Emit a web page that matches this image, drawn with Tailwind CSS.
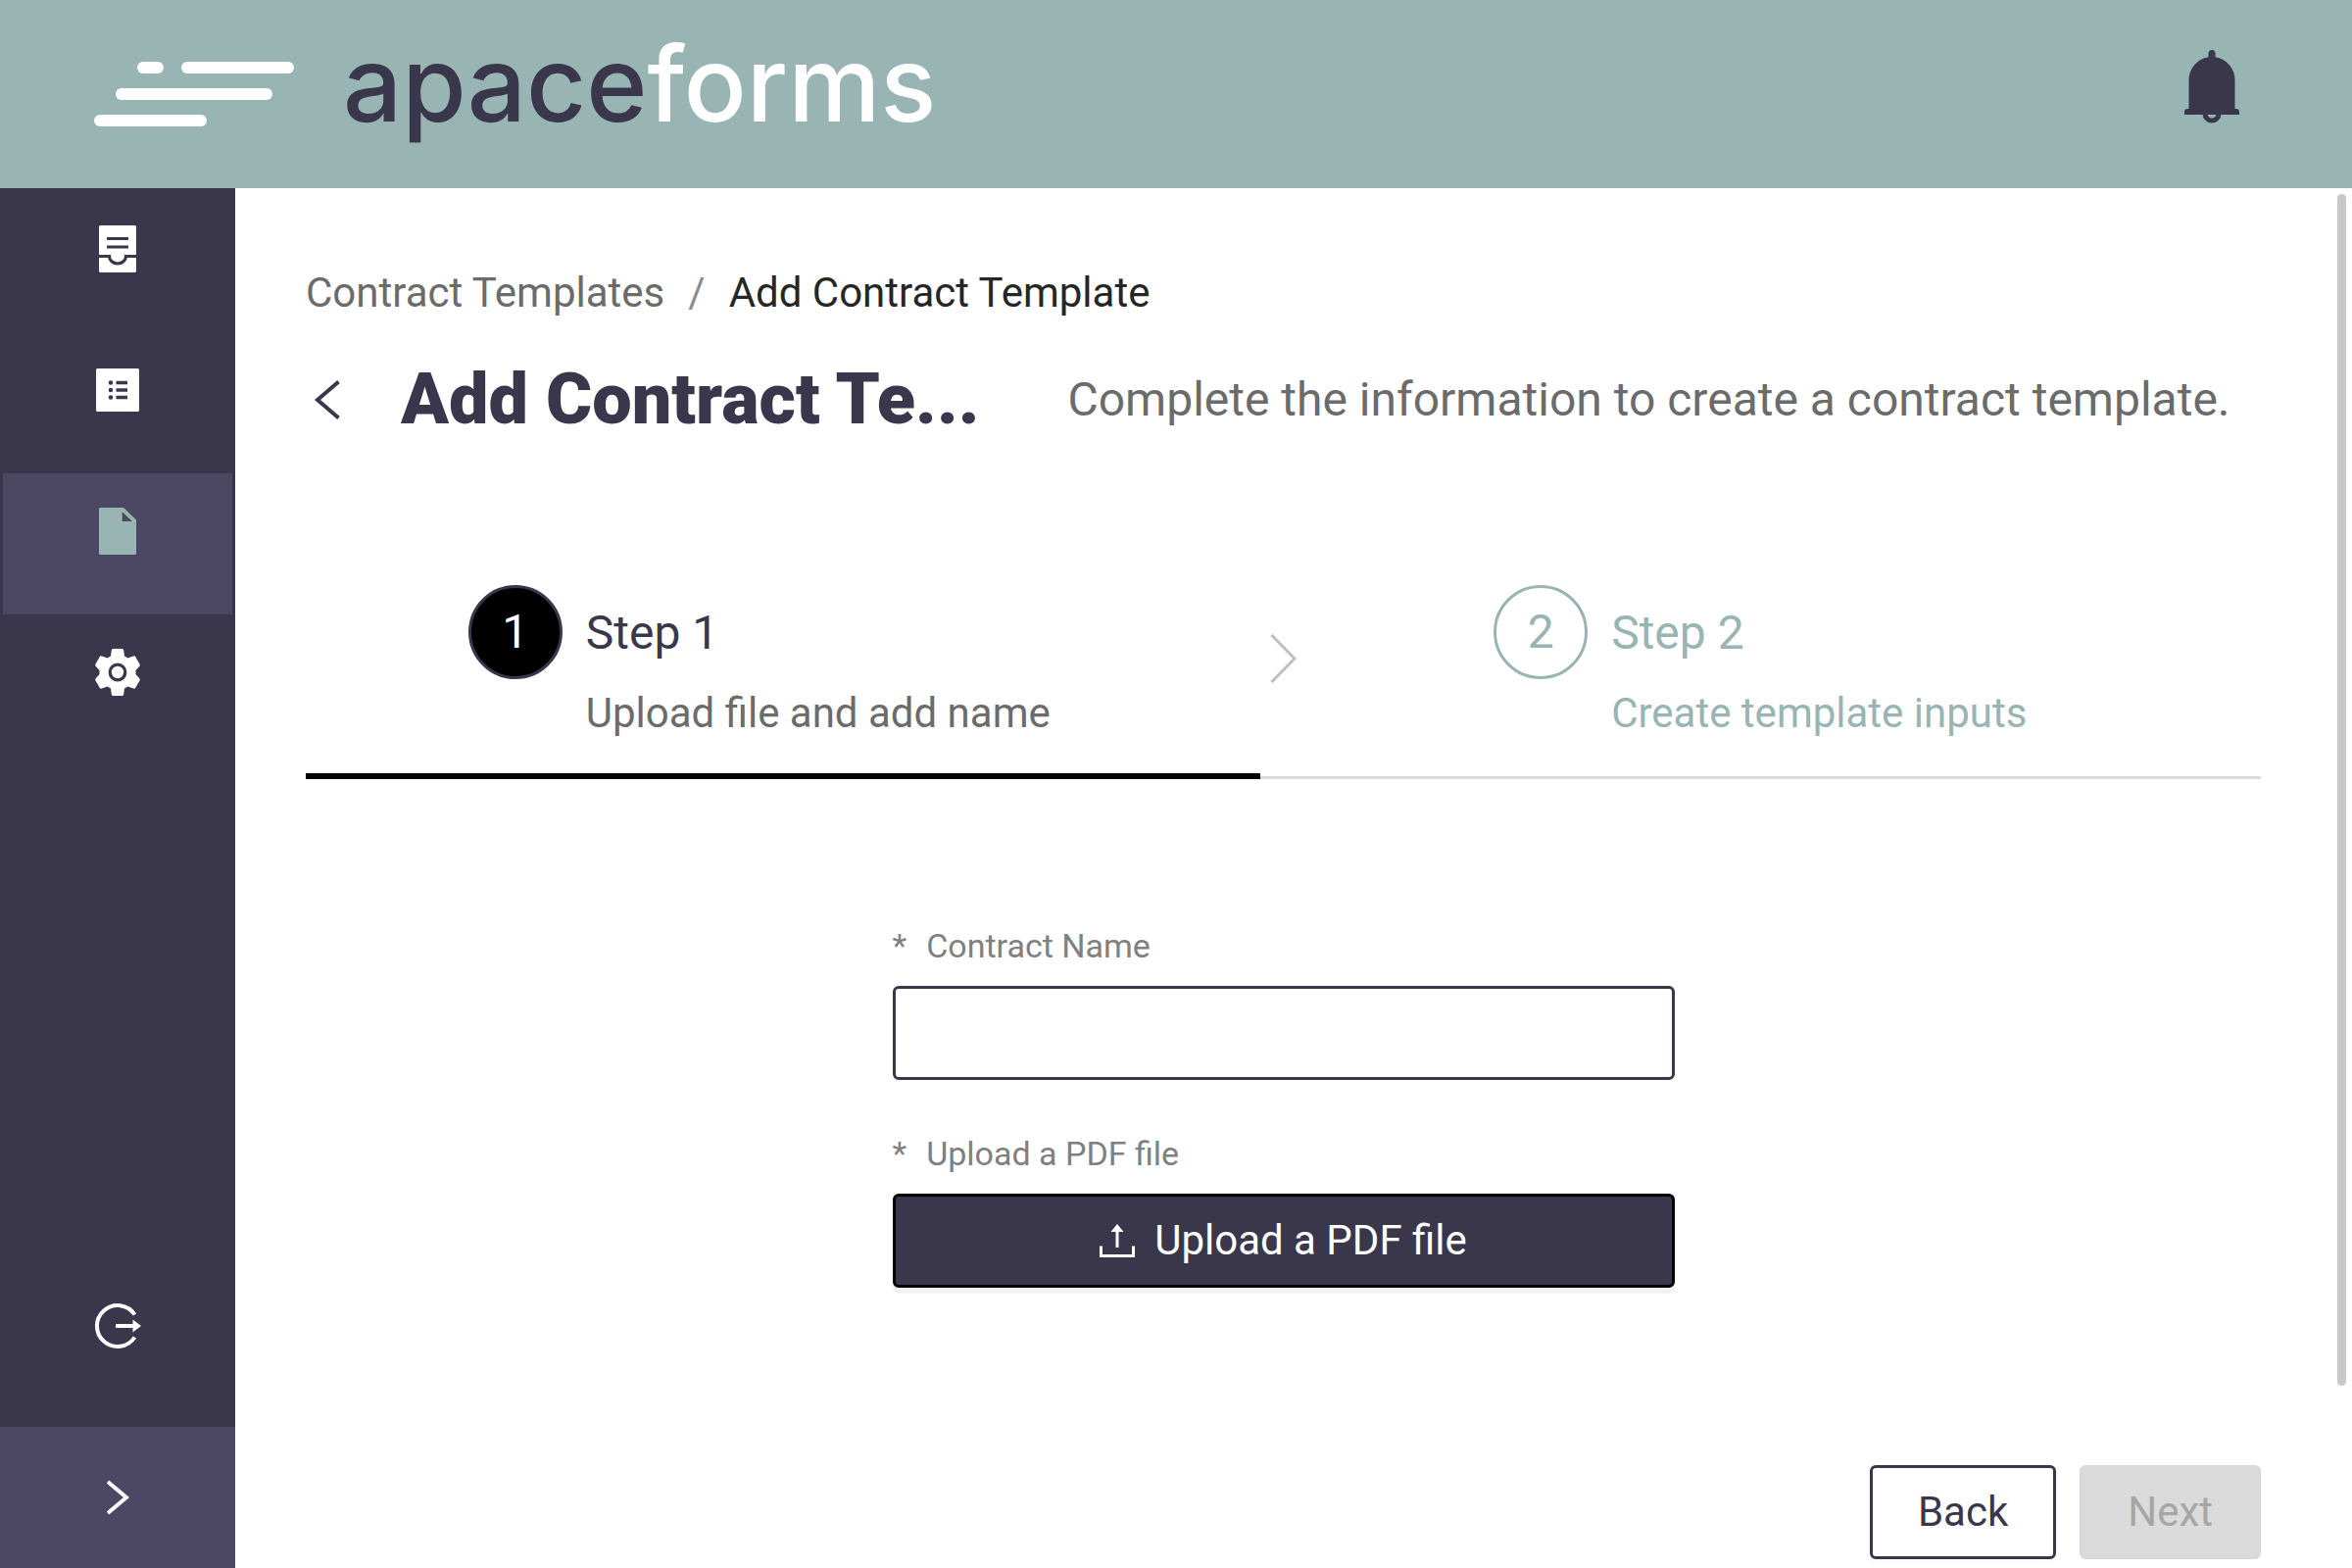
<!DOCTYPE html>
<html lang="en">
<head>
<meta charset="utf-8">
<meta name="viewport" content="width=device-width, initial-scale=1">
<title>Add Contract Template</title>
<script src="https://cdn.jsdelivr.net/npm/@tailwindcss/browser@4"></script>
</head>
<body class="flex min-h-screen flex-col bg-white font-[Roboto,Arial,sans-serif] text-[42px] leading-[66px] text-[#6b6b6b]">
<header class="flex h-48 shrink-0 items-center justify-between bg-[#98b4b3] pr-[114px] pl-24">
  <a href="#" class="flex items-center gap-[50px]" aria-label="apaceforms">
    <svg class="h-[66px] w-[204px]" viewBox="0 0 204 66" fill="#fff" aria-hidden="true">
      <rect x="44" y="0" width="27" height="12" rx="6"/>
      <rect x="89" y="0" width="115" height="12" rx="6"/>
      <rect x="22" y="27" width="160" height="12" rx="6"/>
      <rect x="0" y="54" width="115" height="12" rx="6"/>
    </svg>
    <span class="pb-5 font-[Inter,sans-serif] text-[106px] leading-[120px] font-medium text-[#3a374c]">apace<span class="text-white">forms</span></span>
  </a>
  <button type="button" aria-label="Notifications" class="pb-4">
    <svg class="h-[75px] w-[58px]" viewBox="0 0 58 75" aria-hidden="true">
      <path fill="#3a374c" d="M25.500 3.500a3.500 3.500 0 0 1 7 0V7.300A23.500 23.500 0 0 1 52.500 31V60H54a3 3 0 0 1 3 3v3H1v-3a3 3 0 0 1 3-3h1.500V31A23.500 23.500 0 0 1 25.500 7.300z"/>
      <path fill="none" stroke="#3a374c" stroke-width="5" d="M22 65a7 7 0 0 0 14 0"/>
    </svg>
  </button>
</header>
<div class="flex flex-1">
  <nav class="flex w-60 shrink-0 flex-col bg-[#3a374c]" aria-label="Main">
    <div class="flex flex-col p-[3px]">
      <a href="#" aria-label="Inbox" class="flex h-36 items-center justify-center pb-[26px]">
        <svg class="size-12" viewBox="0 0 48 48" aria-hidden="true">
          <rect x="5" width="38" height="48" rx="1.500" fill="#fff"/>
          <path fill="none" stroke="#3a374c" stroke-width="3.200" d="M13 13.500h22M13 22h22M5 31.500h10.500a8.500 7.500 0 0 0 17 0H43"/>
        </svg>
      </a>
      <a href="#" aria-label="Forms" class="flex h-36 items-center justify-center pb-[26px]">
        <svg class="size-12" viewBox="0 0 48 48" aria-hidden="true">
          <rect x="2" y="2" width="44" height="44" rx="1.500" fill="#fff"/>
          <path stroke="#3a374c" stroke-width="3.600" d="M22.500 16.500h11.500M22.500 24h11.500M22.500 31.500h11.500"/>
          <g fill="#3a374c"><circle cx="17" cy="16.500" r="2.300"/><circle cx="17" cy="24" r="2.300"/><circle cx="17" cy="31.500" r="2.300"/></g>
        </svg>
      </a>
      <a href="#" aria-label="Contract Templates" aria-current="page" class="flex h-36 items-center justify-center bg-[#4c4864] pb-[26px]">
        <svg class="size-12" viewBox="0 0 48 48" aria-hidden="true">
          <path fill="#98b4b3" fill-rule="evenodd" d="M6.500 0H30l13 12.500V46.500a1.500 1.500 0 0 1-1.500 1.500h-35A1.500 1.500 0 0 1 5 46.500v-45A1.500 1.500 0 0 1 6.500 0zM28.700 4.200V14H39z"/>
        </svg>
      </a>
      <a href="#" aria-label="Settings" class="flex h-36 items-center justify-center pb-[26px]">
        <svg class="size-12" viewBox="0 0 48 48" aria-hidden="true">
          <path fill="#fff" d="M19.500 0h9q1.500 0 1.700 1.500l.8 6 3.500 2 5.500-2q1.500-.5 2.300.8l4.300 7.500q.7 1.300-.5 2.300L42.500 22v4l3.600 3.900q1.200 1 .5 2.300l-4.300 7.500q-.8 1.300-2.300.8l-5.500-2-3.500 2-.8 6Q30 48 28.500 48h-9q-1.500 0-1.700-1.500l-.8-6-3.500-2-5.500 2q-1.500.5-2.300-.8L1.400 32.200q-.7-1.300.5-2.300L5.500 26v-4l-3.600-3.900q-1.200-1-.5-2.300l4.300-7.500Q6.500 7 8 7.500l5.500 2 3.500-2 .8-6Q18 0 19.500 0z"/>
          <circle cx="24" cy="24" r="7.800" fill="none" stroke="#3a374c" stroke-width="3.200"/>
        </svg>
      </a>
    </div>
    <div class="mt-auto">
      <a href="#" aria-label="Log out" class="flex h-[206px] items-center justify-center">
        <svg class="size-12" viewBox="0 0 48 48" aria-hidden="true">
          <path fill="none" stroke="#fff" stroke-width="4" d="M41.500 12.500A21 21 0 1 0 41.500 35.500"/>
          <path fill="none" stroke="#fff" stroke-width="4" d="M22 24h19"/>
          <path fill="#fff" d="M39.500 17.500 48 24l-8.500 6.500z"/>
        </svg>
      </a>
      <button type="button" aria-label="Expand menu" class="flex h-36 w-full items-center justify-center bg-[#4c4864]">
        <svg class="h-9 w-6" viewBox="0 0 24 36" aria-hidden="true">
          <path fill="none" stroke="#fff" stroke-width="4" d="M2 2l19 16-19 16"/>
        </svg>
      </button>
    </div>
  </nav>
  <main class="relative flex min-w-0 flex-1 flex-col pt-[74px] pr-[93px] pb-[9px] pl-[72px]">
    <nav aria-label="Breadcrumb">
      <ol class="flex gap-6">
        <li><a href="#">Contract Templates</a></li>
        <li aria-hidden="true" class="text-[#8c8c8c]">/</li>
        <li aria-current="page" class="text-[#262626]">Add Contract Template</li>
      </ol>
    </nav>
    <div class="mt-7 flex h-24 items-center">
      <button type="button" aria-label="Go back" class="mr-[62px] pl-2">
        <svg class="h-10 w-[27px]" viewBox="0 0 27 40" aria-hidden="true">
          <path fill="none" stroke="#3a374c" stroke-width="4" d="M25.500 1.500 4 20l21.500 18.500"/>
        </svg>
      </button>
      <h1 class="mr-[90px] text-[72px] leading-24 font-black whitespace-nowrap text-[#3a374c]">Add Contract Te...</h1>
      <p class="text-[48px] whitespace-nowrap">Complete the information to create a contract template.</p>
    </div>
    <ol class="mt-[141px] flex">
      <li class="flex w-[calc(50%-24px)] justify-center gap-6 pr-12" aria-current="step">
        <span class="flex size-24 items-center justify-center rounded-full border-3 border-[#3a374c] bg-black text-[48px] text-white">1</span>
        <div class="pt-4">
          <h2 class="text-[48px] text-[#3a374c]">Step 1</h2>
          <p class="pt-4">Upload file and add name</p>
        </div>
      </li>
      <li class="relative flex flex-1 justify-center gap-6 text-[#98b4b3]">
        <svg class="absolute top-[50px] left-2.5 h-[50px] w-[27px]" viewBox="0 0 27 50" aria-hidden="true">
          <path fill="none" stroke="#bfbfbf" stroke-width="3" d="M1.500 1 25 25 1.500 49"/>
        </svg>
        <span class="flex size-24 items-center justify-center rounded-full border-3 border-[#98b4b3] text-[48px]">2</span>
        <div class="pt-4">
          <h2 class="text-[48px]">Step 2</h2>
          <p class="pt-4">Create template inputs</p>
        </div>
      </li>
    </ol>
    <div class="mt-7 flex items-end" aria-hidden="true">
      <div class="h-1.5 w-[calc(50%-24px)] bg-black"></div>
      <div class="h-[3px] flex-1 bg-[#dbdbdb]"></div>
    </div>
    <form class="flex flex-1 flex-col pt-[137px]">
      <div class="mx-auto w-2/5">
        <label for="contract-name" class="flex gap-5 text-[34px] text-[#808080]"><span>*</span>Contract Name</label>
        <input id="contract-name" type="text" required class="mt-2 block h-24 w-full rounded-md border-3 border-[#3a374c] px-8 outline-none">
        <label for="upload" class="mt-[42px] flex gap-5 text-[34px] text-[#808080]"><span>*</span>Upload a PDF file</label>
        <button id="upload" type="button" class="mt-2 flex h-24 w-full items-center justify-center gap-5 rounded-md border-3 border-black bg-[#3a374c] text-white shadow-[0_6px_0_#f3f3f3]">
          <svg class="h-9 w-9" viewBox="0 0 36 36" aria-hidden="true">
            <path fill="none" stroke="#fff" stroke-width="3" d="M1.500 23.500V33.500h33V23.500M18 8v17"/>
            <path fill="#fff" d="M18 1l6.500 8h-13z"/>
          </svg>
          Upload a PDF file
        </button>
      </div>
      <div class="mt-auto flex justify-end gap-6">
        <button type="button" class="flex h-24 items-center rounded-md border-3 border-[#3a374c] px-[46px] text-[#3a374c] shadow-[0_6px_0_#fcfcfc]">Back</button>
        <button type="submit" disabled class="flex h-24 items-center rounded-md border-3 border-[#d9d9d9] bg-[#dbdbdb] px-[46px] text-[#a6a6a6]">Next</button>
      </div>
    </form>
    <div class="absolute top-1.5 right-1.5 bottom-[186px] w-[9px] rounded-full bg-[#c8c8c8]" aria-hidden="true"></div>
  </main>
</div>
</body>
</html>
